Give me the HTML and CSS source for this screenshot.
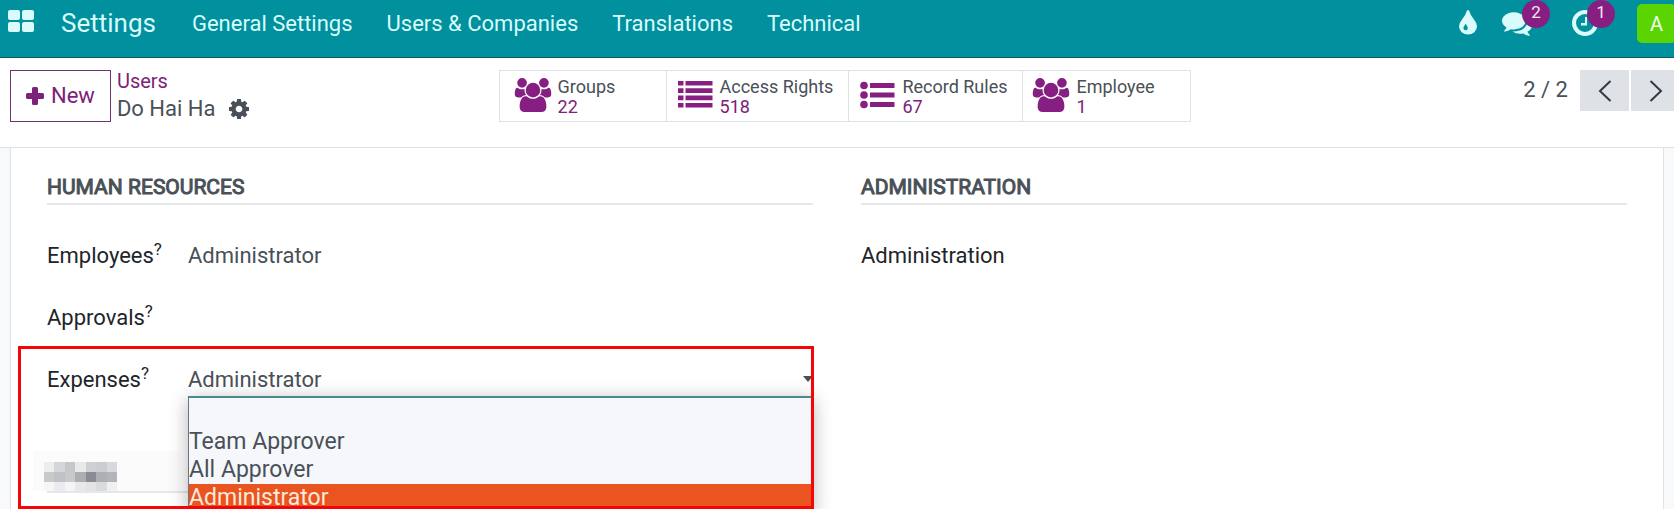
FILE: index.html
```html
<!DOCTYPE html>
<html lang="en">
<head>
<meta charset="utf-8">
<title>Do Hai Ha - Users</title>
<link rel="stylesheet" href="styles.css">
</head>
<body>
<svg class="defs" aria-hidden="true">
  <symbol id="users" viewBox="-64 0 1920 1792"><path d="M529 896q-162 5-265 128h-134q-82 0-138-40.5t-56-118.5q0-353 124-353 6 0 43.5 21t97.5 42.5 119 21.5q67 0 133-23-5 37-5 66 0 139 81 256zm1071 637q0 120-73 189.5t-194 69.5h-874q-121 0-194-69.5t-73-189.5q0-53 3.5-103.5t14-109 26.5-108.5 43-97.5 62-81 85.5-53.5 111.5-20q10 0 43 21.5t73 48 107 48 135 21.5 135-21.5 107-48 73-48 43-21.5q61 0 111.5 20t85.5 53.5 62 81 43 97.5 26.5 108.5 14 109 3.5 103.5zm-1024-1277q0 106-75 181t-181 75-181-75-75-181 75-181 181-75 181 75 75 181zm704 384q0 159-112.5 271.5t-271.5 112.5-271.5-112.5-112.5-271.5 112.5-271.5 271.5-112.5 271.5 112.5 112.5 271.5zm576 225q0 78-56 118.5t-138 40.5h-134q-103-123-265-128 81-117 81-256 0-29-5-66 66 23 133 23 59 0 119-21.5t97.5-42.5 43.5-21q124 0 124 353zm-128-609q0 106-75 181t-181 75-181-75-75-181 75-181 181-75 181 75 75 181z"/></symbol>
</svg>
<div class="app">
  <header class="navbar">
    <button class="apps" aria-label="Apps"><svg width="26" height="22" viewBox="0 0 26 22"><rect width="12" height="10" rx="2"/><rect x="14" width="12" height="10" rx="2"/><rect y="12" width="12" height="10" rx="2"/><rect x="14" y="12" width="12" height="10" rx="2"/></svg></button>
    <a class="brand" href="#">Settings</a>
    <nav class="menu">
      <a href="#">General Settings</a>
      <a href="#">Users &amp; Companies</a>
      <a href="#">Translations</a>
      <a href="#">Technical</a>
    </nav>
    <div class="systray">
      <button class="tray drop" aria-label="Theme"><svg width="18" height="26" viewBox="0 0 18 26"><path fill-rule="evenodd" d="M9 1q-.9 0-1.200 1Q6.800 5.600 3 10.600 0 14.500 0 17.200a9 8.400 0 0 0 18 0q0-2.700-3-6.600Q11.200 5.600 10.200 2 9.900 1 9 1zM6.600 14.900q.5 0 .6.500.3 1.100 1.100 2.200.5.700.5 1.500a2.200 2.200 0 0 1-4.400 0q0-.8.500-1.500.8-1.100 1.100-2.200.1-.5.600-.5z"/></svg></button>
      <button class="tray chat" aria-label="Messages"><svg width="30" height="30" viewBox="0 0 1792 1792"><path d="M1408 768q0 139-94 257t-256.500 186.500-353.500 68.500q-86 0-176-16-124 88-278 128-36 9-86 16h-3q-11 0-20.500-8t-11.500-21q-1-3-1-6.500t.5-6.500 2-6l2.500-5 3.500-5.500 4-5 4.500-5 4-4.500q5-6 23-25t26-29.500 22.500-29 25-38.500 20.500-44q-124-72-195-177t-71-224q0-139 94-257t256.500-186.500 353.500-68.500 353.500 68.500 256.500 186.500 94 257zm384 256q0 120-71 224.500t-195 176.500q10 24 20.500 44t25 38.500 22.500 29 26 29.500 23 25q1 1 4 4.500t4.500 5 4 5 3.500 5.500l2.500 5 2 6 .5 6.500-1 6.500q-3 14-13 22t-22 7q-50-7-86-16-154-40-278-128-90 16-176 16-271 0-472-132 58 4 88 4 161 0 309-45t264-129q125-92 192-212t67-254q0-77-23-152 129 71 204 178t75 230z"/></svg><span class="badge">2</span></button>
      <button class="tray clock" aria-label="Activities"><svg width="26" height="26" viewBox="0 0 26 26"><circle cx="13" cy="13" r="11" fill="none" stroke="currentColor" stroke-width="4"/><path d="M13 7h2v8.500H9v-2.500h4z"/></svg><span class="badge">1</span></button>
      <button class="avatar">A</button>
    </div>
  </header>

  <div class="control">
    <div class="start">
      <button class="new"><svg width="18" height="18" viewBox="0 0 18 18"><path d="M6 1.500Q6 0 7.500 0h3Q12 0 12 1.500V6h4.500Q18 6 18 7.500v3q0 1.500-1.500 1.500H12v4.500q0 1.500-1.500 1.500h-3Q6 18 6 16.500V12H1.500Q0 12 0 10.500v-3Q0 6 1.500 6H6z"/></svg>New</button>
      <div class="crumbs">
        <a href="#">Users</a>
        <div class="current"><span>Do Hai Ha</span><button class="cog" aria-label="Actions"><svg width="20" height="20" viewBox="128 128 1536 1536"><path d="M1152 896q0-106-75-181t-181-75-181 75-75 181 75 181 181 75 181-75 75-181zm512-109v222q0 12-8 23t-20 13l-185 28q-19 54-39 91 35 50 107 138 10 12 10 25t-9 23q-27 37-99 108t-94 71q-12 0-26-9l-138-108q-44 23-91 38-16 136-29 186-7 28-36 28h-222q-14 0-24.500-8.500t-11.500-21.500l-28-184q-49-16-90-37l-141 107q-10 9-25 9-14 0-25-11-126-114-165-168-7-10-7-23 0-12 8-23 15-21 51-66.500t54-70.500q-27-50-41-99l-183-27q-13-2-21-12.500t-8-23.500v-222q0-12 8-23t19-13l186-28q14-46 39-92-40-57-107-138-10-12-10-24 0-10 9-23 26-36 98.500-107.500t94.500-71.500q13 0 26 10l138 107q44-23 91-38 16-136 29-186 7-28 36-28h222q14 0 24.500 8.500t11.500 21.500l28 184q49 16 90 37l142-107q9-9 24-9 13 0 25 10 129 119 165 170 7 8 7 22 0 12-8 23-15 21-51 66.500t-54 70.500q26 50 41 98l183 28q13 2 21 12.500t8 23.500z"/></svg></button></div>
      </div>
    </div>
    <div class="stats">
      <button class="stat first"><svg width="38" height="34"><use href="#users"/></svg><span class="info"><span>Groups</span><span class="num">22</span></span></button>
      <button class="stat"><svg width="38" height="34" viewBox="0 0 38 34"><path d="M2 3h5.500v4.600H2zM9.500 3h27v4.600h-27zM2 10.300h5.500v4.600H2zM9.500 10.300h27v4.600h-27zM2 17.600h5.500v4.600H2zM9.500 17.600h27v4.600h-27zM2 24.900h5.500v4.600H2zM9.500 24.900h27v4.600h-27z"/></svg><span class="info"><span>Access Rights</span><span class="num">518</span></span></button>
      <button class="stat"><svg width="38" height="34" viewBox="0 0 38 34"><circle cx="6" cy="7.500" r="3.800"/><circle cx="6" cy="17" r="3.800"/><circle cx="6" cy="26.500" r="3.800"/><path d="M12 5h24.500v5H12zM12 14.500h24.500v5H12zM12 24h24.500v5H12z"/></svg><span class="info"><span>Record Rules</span><span class="num">67</span></span></button>
      <button class="stat"><svg width="38" height="34"><use href="#users"/></svg><span class="info"><span>Employee</span><span class="num">1</span></span></button>
    </div>
    <div class="pager">
      <span class="count">2 / 2</span>
      <button aria-label="Previous"><svg width="14" height="22" viewBox="0 0 14 22"><path d="M12.500 1 2 11l10.500 10"/></svg></button>
      <button aria-label="Next"><svg width="14" height="22" viewBox="0 0 14 22"><path d="M1.500 1 12 11 1.500 21"/></svg></button>
    </div>
  </div>

  <main class="content">
    <div class="sheet">
      <section class="group">
        <h2>Human Resources</h2>
        <div class="field"><label for="employees">Employees<sup>?</sup></label><select id="employees"><option>Administrator</option></select></div>
        <div class="field"><label for="approvals">Approvals<sup>?</sup></label><select id="approvals"><option></option></select></div>
        <div class="field">
          <label for="expenses">Expenses<sup>?</sup></label>
          <div class="picker">
            <select id="expenses"><option>Administrator</option></select>
            <svg class="caret" width="10" height="6" viewBox="0 0 10 6"><path d="M0 0h10L5 6z"/></svg>
            <ul class="popup" role="listbox">
              <li role="option"></li>
              <li role="option">Team Approver</li>
              <li role="option">All Approver</li>
              <li role="option" class="selected" aria-selected="true">Administrator</li>
            </ul>
          </div>
        </div>
        <div class="hidden-title">
          <svg width="148" height="40" viewBox="0 0 148 40" shape-rendering="crispEdges">
            <path fill="#fbfbfc" d="M0 0h148v40H0z"/>
            <path fill="#eeedec" d="M11 11h10v10H11z"/><path fill="#d5d6d9" d="M21 11h11v10H21z"/><path fill="#c6c7ca" d="M32 11h10v10H32z"/><path fill="#e8e9eb" d="M42 11h11v10H42z"/><path fill="#d0d0d2" d="M53 11h10v10H53z"/><path fill="#cbccd0" d="M63 11h11v10H63z"/><path fill="#d8d9dd" d="M74 11h10v10H74z"/>
            <path fill="#c8c9c9" d="M11 21h10v10H11z"/><path fill="#c1c2c7" d="M21 21h11v10H21z"/><path fill="#c8c9cc" d="M32 21h10v10H32z"/><path fill="#adaeb0" d="M42 21h11v10H42z"/><path fill="#8b8c93" d="M53 21h10v10H53z"/><path fill="#aeafb1" d="M63 21h11v10H63z"/><path fill="#b1b4ba" d="M74 21h10v10H74z"/>
            <path fill="#f7f6f4" d="M11 31h10v9H11z"/><path fill="#e9ebee" d="M21 31h11v9H21z"/><path fill="#f4f4f5" d="M32 31h10v9H32z"/><path fill="#e8e8ea" d="M42 31h11v9H42z"/><path fill="#e3e3e6" d="M53 31h10v9H53z"/><path fill="#dadbdf" d="M63 31h11v9H63z"/><path fill="#eef0f2" d="M74 31h10v9H74z"/>
          </svg>
        </div>
        <div class="highlight"></div>
      </section>
      <section class="group">
        <h2>Administration</h2>
        <div class="field"><label for="admin">Administration</label><select id="admin"><option></option></select></div>
      </section>
    </div>
  </main>
</div>
</body>
</html>
```
FILE: styles.css
```css
* { box-sizing: border-box; }
body {
  margin: 0;
  font: 22px/28px Roboto, "Liberation Sans", sans-serif;
  color: #495057;
  background: #fff;
}
button, select { font: inherit; color: inherit; background: none; border: 0; padding: 0; margin: 0; }
a { color: inherit; text-decoration: none; }
svg { display: block; fill: currentColor; flex: none; }
.defs { position: absolute; width: 0; height: 0; }
.app { display: flex; flex-direction: column; height: 100vh; overflow: hidden; }

/* Top bar */
.navbar {
  display: flex;
  align-items: flex-start;
  height: 58px;
  flex: none;
  padding-left: 8px;
  background: #00909e;
  border-bottom: 1px solid #0b5d66;
  color: #d9fbfc;
}
.apps { margin-top: 10px; }
.brand { font-size: 26px; line-height: 46px; margin-left: 27px; }
.menu { display: flex; gap: 34px; margin-left: 36px; line-height: 48px; white-space: nowrap; }
.systray { display: flex; margin-left: auto; margin-right: -2px; }
.tray { position: relative; height: 28px; margin-top: 8px; }
.chat { margin-left: 25px; }
.clock { margin-left: 40px; margin-top: 9px; }
.badge {
  position: absolute;
  left: 20px;
  top: -8px;
  width: 28px;
  height: 28px;
  border-radius: 14px;
  background: #871f82;
  color: #f2e6f2;
  font-size: 17px;
  line-height: 24px;
  text-align: center;
}
.clock .badge { left: 15px; top: -9px; }
.avatar {
  width: 39px;
  height: 39px;
  margin: 4px 0 0 39px;
  border-radius: 5px;
  background: #5bd404;
  color: #f0fbe8;
  font-size: 20px;
}

/* Control panel */
.control {
  display: grid;
  grid-template-columns: 1fr auto 1fr;
  align-items: start;
  flex: none;
  height: 90px;
  margin-right: -6px;
  padding: 12px 0 0 10px;
  border-bottom: 1px solid #dee2e6;
}
.start { display: flex; }
.new {
  display: flex;
  align-items: center;
  gap: 7px;
  height: 52px;
  padding: 0 15px;
  border: 1px solid #71336f;
  color: #7c2278;
}
.crumbs { padding-left: 6px; white-space: nowrap; }
.crumbs a { display: block; font-size: 20px; line-height: 22px; color: #7c2278; }
.current { display: flex; align-items: center; gap: 14px; line-height: 34px; }
.stats { display: flex; }
.stat {
  display: flex;
  align-items: center;
  gap: 6px;
  min-width: 168px;
  height: 52px;
  padding: 2px 15px 0 9px;
  border: 1px solid #dee2e6;
  border-left-width: 0;
  font-size: 18px;
  line-height: 20px;
  text-align: left;
}
.stat.first { border-left-width: 1px; padding-left: 14px; }
.stat svg { color: #871f82; margin-bottom: 4px; }
.info { display: flex; flex-direction: column; white-space: nowrap; }
.num { color: #7c2278; }
.pager { display: flex; justify-content: flex-end; gap: 2px; }
.count { line-height: 40px; margin-right: 10px; }
.pager button { display: grid; place-items: center; width: 49px; height: 41px; background: #dee2e6; color: #343a40; }
.pager svg { fill: none; stroke: currentColor; stroke-width: 2; }

/* Form sheet */
.content { flex: 1; min-height: 0; padding: 0 10px; background: #f8f9fa; }
.sheet {
  display: grid;
  grid-template-columns: 1fr 1fr;
  gap: 48px;
  height: 100%;
  padding: 24px 36px 0;
  background: #fff;
  border: solid #dee2e6;
  border-width: 0 1px;
}
.group { position: relative; }
h2 {
  margin: 0 0 22px;
  padding-bottom: 1px;
  font-size: 21px;
  line-height: 30px;
  font-weight: 400;
  -webkit-text-stroke: 1px currentColor;
  text-transform: uppercase;
  border-bottom: 2px solid #e6e7e8;
}
.field { display: flex; align-items: flex-start; height: 62px; padding-top: 15px; }
.field label { width: 141px; flex: none; color: #212529; white-space: nowrap; }
sup { font-size: 17px; line-height: 0; vertical-align: 8px; }
select { appearance: none; flex: 1; height: 28px; width: 100%; }
.picker { position: relative; flex: 1; }
.picker select { display: block; }
.caret { position: absolute; right: 0; top: 10px; }
.popup {
  position: absolute;
  top: 30px;
  left: 0;
  right: 0;
  margin: 0;
  padding: 2px 0 0;
  list-style: none;
  font-size: 23px;
  background: #f5f7fb;
  border: 1px solid #6c757d;
  border-top: 2px solid #478b90;
  box-shadow: 0 4px 18px rgba(0, 0, 0, .3);
}
.popup li { height: 28px; line-height: 28px; }
.popup .selected { background: #e95420; color: #fbe9dc; }
.hidden-title { margin-top: 38px; border-bottom: 2px solid #e6e7e8; }
.hidden-title svg { margin-left: -14px; }
.highlight {
  position: absolute;
  inset: 174px -1px 0 -29px;
  border: 3px solid #f50505;
}
```
